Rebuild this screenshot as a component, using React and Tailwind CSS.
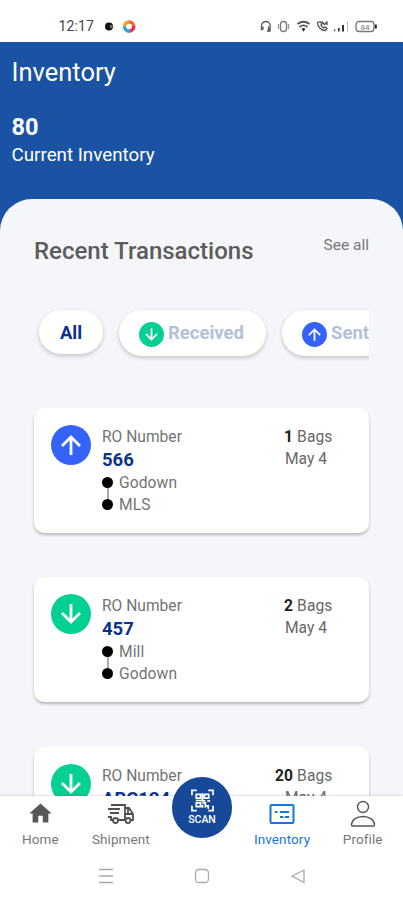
import React from "react";

function Arrow({ down, className }) {
  return (
    <svg viewBox="0 0 40 40" className={className}>
      <circle cx="20" cy="20" r="20" fill={down ? "#05d094" : "#3563fa"} />
      <g transform={down ? "rotate(180 20 20)" : undefined} fill="none" stroke="#fff" strokeWidth="2.8">
        <path d="M20 30V12.5M11 21l9-9 9 9" />
      </g>
    </svg>
  );
}

function StatusBar() {
  return (
    <div className="flex h-[41.500px] shrink-0 items-start bg-white pt-[18px] pl-[58.500px] pr-[25px]">
      <span className="w-[45.500px] text-[14px] leading-[17px] tracking-[0.1px] text-[#444]">12:17</span>
      <svg className="mt-[2px] h-[13px] w-[34px] shrink-0" viewBox="0 0 34 13">
        <circle cx="5" cy="6.500" r="4" fill="#111" />
        <path d="M6 4.500l4 2-4 2z" fill="#777" />
        <g fill="none" strokeWidth="3.600">
          <path d="M20.500 7a4.700 4.700 0 0 1 5-5" stroke="#f0a52b" />
          <path d="M25 2a4.700 4.700 0 0 1 4.700 4.500" stroke="#ee6a2c" />
          <path d="M29.700 6a4.700 4.700 0 0 1-4.700 5" stroke="#e0315c" />
          <path d="M26 11a4.700 4.700 0 0 1-5.500-4.500" stroke="#36a5cf" />
        </g>
        <circle cx="25.200" cy="6.500" r="2.700" fill="#fff" />
      </svg>
      <svg className="ml-auto mt-[2px] h-[13px] w-[120px] shrink-0" viewBox="0 0 120 13" fill="none" stroke="#555" strokeWidth="1.300">
        <path d="M5 9.500H3.500V5.500a4.300 4 0 0 1 8.600 0v4h-1.600V6.500M5 6.500v3M12 9.500v1.500H9" />
        <rect x="22.500" y="1.500" width="6" height="10" rx="2.400" stroke="#777" />
        <path d="M20.500 4v5M30.500 4v5" stroke="#999" />
        <path d="M39.500 4q6-4.500 12 0M41.500 7q4-3.300 8 0" strokeWidth="1.800" />
        <path d="M43.500 8.800q2-1.500 4 0l-2 3z" fill="#333" stroke="none" />
        <path d="M59.500 2.500c0 4 3 8 8 8l1.500-2-2-1.500-1.500 1c-1.500-.7-2-1.500-2.500-3l1-1.300-1.800-2zM64 1.500l2.500 3 3-3M69 5V1.500" />
        <g fill="#333" stroke="none">
          <rect x="76" y="9" width="1.500" height="2.500" fill="#888" /><rect x="80" y="8" width="1.700" height="3.500" />
          <rect x="84" y="5" width="2" height="6.500" /><rect x="89" y="1" width="1" height="10.500" fill="#bbb" />
        </g>
        <rect x="98" y="1.500" width="18" height="10" rx="3" stroke="#777" />
        <path d="M117.800 4.500v4" stroke="#222" strokeWidth="2" />
        <text x="107" y="9.500" fontSize="8" textAnchor="middle" fill="#777" stroke="none">84</text>
      </svg>
    </div>
  );
}

function Card({ down, number, from, to, bags }) {
  return (
    <div className="flex h-[125px] w-[335px] shrink-0 rounded-[10px] bg-white pl-[17px] pt-[18px] shadow-[0_2px_3px_rgba(0,0,0,0.25)]">
      <Arrow down={down} className="-mt-px h-10 w-10 shrink-0" />
      <div className="ml-[11px] w-[183px] whitespace-nowrap text-[15.6px] text-[#747474]">
        <div className="h-[22px] leading-[22px]">RO Number</div>
        <div className="h-[25px] text-[18.5px] font-bold leading-[25px] text-[#0c328f]">{number}</div>
        <div className="-mt-px flex">
          <svg className="h-[44px] w-[17px]" viewBox="0 0 17 44">
            <path d="M6 10v22" stroke="#555" strokeWidth="1" />
            <circle cx="5.500" cy="10.500" r="5.500" /><circle cx="5.500" cy="32.500" r="5.500" />
          </svg>
          <div className="leading-[22px] tracking-[0.1px]">
            <div>{from}</div>
            <div>{to}</div>
          </div>
        </div>
      </div>
      <div className="w-[65px] whitespace-nowrap text-[15.6px] leading-[22px] text-[#686868]">
        <div className="flex w-[47.500px] justify-end gap-1 tracking-[0.1px]">
          <b className="font-bold text-[#202020]">{bags}</b><span>Bags</span>
        </div>
        <div>May 4</div>
      </div>
    </div>
  );
}

function Pill({ label, down, className }) {
  return (
    <div className={`flex shrink-0 whitespace-nowrap rounded-full bg-white text-[18.500px] font-bold shadow-[0_2px_4px_rgba(0,0,0,0.2)] ${className}`}>
      <Arrow down={down} className="mr-[4px] mt-[12px] h-[25px] w-[25px]" />
      <span className="leading-[46px]">{label}</span>
    </div>
  );
}

function Tab({ label, children, active, className = "" }) {
  return (
    <div className={`flex w-[80.600px] flex-col items-center ${active ? "text-[#1676dc]" : "text-[#777]"} ${className}`}>
      <div className="flex h-[31px] items-end">{children}</div>
      <span className="mt-[3px] text-[13.5px] leading-[18px] tracking-[0.1px]">{label}</span>
    </div>
  );
}

export default function App() {
  return (
    <div className="flex h-[900px] w-[403px] flex-col overflow-hidden bg-[#f4f6fa] font-[Roboto,sans-serif]">
      <StatusBar />
      <header className="h-[157.500px] shrink-0 bg-[#1a52a4] pl-[11.500px] pt-[14px] text-white">
        <h1 className="text-[25.5px] leading-[32px]">Inventory</h1>
        <div className="mt-[24px] text-[23.500px] font-bold leading-[30px]">80</div>
        <div className="text-[18.8px] leading-[27px]">Current Inventory</div>
      </header>
      <div className="flex min-h-0 flex-1 bg-[#1a52a4]">
        <main className="flex w-full flex-col overflow-hidden rounded-t-[32px] bg-[#f4f6fa] px-[34px]">
          <div className="flex h-[100px] shrink-0 justify-between pt-[36px] whitespace-nowrap">
            <h2 className="text-[24px] font-medium leading-[32px] text-[#5c5c5c]">Recent Transactions</h2>
            <span className="text-[15.500px] leading-[20px] text-[#777]">See all</span>
          </div>
          <div className="flex h-[70px] shrink-0 gap-4 overflow-hidden pl-[5px] pt-[11px]">
            <div className="h-[44px] w-[64px] shrink-0 rounded-full bg-white text-center text-[18.5px] font-bold leading-[46px] text-[#0c328f] shadow-[0_2px_4px_rgba(0,0,0,0.2)]">All</div>
            <Pill down label="Received" className="h-[46px] w-[147px] pl-[20px] text-[#b2c1da]" />
            <Pill label="Sent" className="h-[46px] w-[120px] pl-[20px] text-[#b2c1da]" />
          </div>
          <div className="mt-[38.500px] flex flex-col gap-[44.500px]">
            <Card number="566" from="Godown" to="MLS" bags="1" />
            <Card down number="457" from="Mill" to="Godown" bags="2" />
            <Card down number="ABC124" from="Mill" to="Godown" bags="20" />
          </div>
        </main>
      </div>
      <footer className="relative h-[104px] shrink-0 bg-white shadow-[0_-1px_2px_rgba(0,0,0,0.12)]">
        <nav className="flex">
          <Tab label="Home">
            <svg className="h-[27px] w-[27px]" viewBox="0 0 24 24" fill="#585858"><path d="M10 20v-6h4v6h5v-8h3L12 3 2 12h3v8z" /></svg>
          </Tab>
          <Tab label="Shipment">
            <svg className="mb-[2px] h-[22px] w-[28px]" viewBox="0 0 28 22" fill="none" stroke="#505050" strokeWidth="1.800">
              <path d="M4 2h14v15h-7M1 6h12M3 10h9M1 14h3v3h2M18 5h4l4 6v6h-2M18 11h8M21 5v6" />
              <circle cx="8.500" cy="17.500" r="2.500" /><circle cx="21" cy="17.500" r="2.500" />
            </svg>
          </Tab>
          <div className="w-[80.600px]" />
          <Tab label="Inventory" active>
            <svg className="mb-[3px] h-[20px] w-[26px]" viewBox="0 0 26 20" fill="none" stroke="#1676dc" strokeWidth="2">
              <rect x="1.500" y="1" width="23" height="18" rx="1" />
              <path d="M6 8h2.500M11 8h9M11 13h3.500M16 13h4" />
            </svg>
          </Tab>
          <Tab label="Profile">
            <svg className="h-[27px] w-[26px]" viewBox="0 0 26 27" fill="none" stroke="#555" strokeWidth="1.400">
              <circle cx="13" cy="7" r="5.500" />
              <path d="M1.500 25c0-5 5-8.500 11.500-8.500S24.500 20 24.500 25q0 1-1 1h-21q-1 0-1-1z" />
            </svg>
          </Tab>
        </nav>
        <div className="absolute left-[172px] top-[-19px] flex h-[61px] w-[60px] flex-col items-center rounded-full bg-[#17499b] pt-[12px] text-white">
          <svg className="h-[23px] w-[23px]" viewBox="0 0 24 23" fill="none" stroke="#fff" strokeWidth="1.800">
            <path d="M1 6V1h5M18 1h5v5M1 17v5h5M18 22h5v-5" />
            <path d="M5.500 5h4.500v4H5.500zM14 5h4.500v4H14zM5.500 14H10v4H5.500zM12 4v8h3M5 11.500h8M12 14h3v3h4M14 18h2M18 17v3M12 16v3M17 12h3" />
          </svg>
          <span className="mt-[1px] text-[10.500px] font-medium leading-[13px]">SCAN</span>
        </div>
        <svg className="mt-[20px] ml-[98px] h-[16px] w-[208px]" viewBox="0 0 208 16" fill="none" stroke="#aaa" strokeWidth="1.300">
          <path d="M1 1.500h14M1 8h14M1 14.500h14" />
          <rect x="97.500" y="1.500" width="13" height="13" rx="3.500" />
          <path d="M206 2v12.500L194 8.200z" />
        </svg>
      </footer>
    </div>
  );
}
